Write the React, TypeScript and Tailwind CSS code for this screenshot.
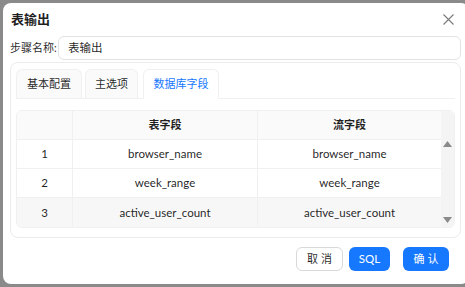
const rows = [
  { id: 1, src: "browser_name", dst: "browser_name" },
  { id: 2, src: "week_range", dst: "week_range" },
  { id: 3, src: "active_user_count", dst: "active_user_count" },
];

const font = "font-['Lato','Noto_Sans_CJK_SC',sans-serif]";

export default function App() {
  return (
    <div
      className={`w-[465px] h-[287px] overflow-hidden bg-[#8a8a8a] pl-[3px] pt-[3px] text-[rgba(0,0,0,0.88)] ${font}`}
    >
      <div className="w-[466px] h-[281px] bg-white rounded-[8px] pl-[7px] pr-[8px] flex flex-col">
        {/* header */}
        <div className="h-[33px] flex items-center justify-between">
          <div className="text-[13px] font-bold pl-[1px]">表输出</div>
          <svg width="11" height="11" viewBox="0 0 11 11" className="mr-[7px]">
            <path d="M0.5 0.5L10.5 10.5M10.5 0.5L0.5 10.5" stroke="#7a7a7a" strokeWidth="1.1" />
          </svg>
        </div>

        {/* step name */}
        <div className="h-[24px] flex items-center">
          <span className="text-[11px] w-[48px] whitespace-nowrap">步骤名称:</span>
          <div className="flex-1 h-[24px] border border-[#e3e3e3] rounded-[6px] flex items-center pl-[9px] text-[11.5px]">
            表输出
          </div>
        </div>

        {/* tabs card */}
        <div className="mt-[2px] h-[176px] border border-[#ececec] rounded-[8px] px-[5px] pt-[6px] flex flex-col">
          <div className="flex items-end border-b border-[#f0f0f0] h-[30px] text-[11px]">
            <div className="w-[66px] h-[29px] bg-[#fafafa] border border-[#f0f0f0] border-b-0 rounded-t-[6px] flex items-center justify-center">
              基本配置
            </div>
            <div className="ml-[3px] w-[53px] h-[29px] bg-[#fafafa] border border-[#f0f0f0] border-b-0 rounded-t-[6px] flex items-center justify-center">
              主选项
            </div>
            <div className="ml-[5px] w-[76px] h-[30px] -mb-px bg-white border border-[#f0f0f0] border-b-white rounded-t-[6px] flex items-center justify-center text-[#1677ff]">
              数据库字段
            </div>
          </div>

          {/* table */}
          <div className="mt-[11px] h-[118px] border border-[#f0f0f0] rounded-[6px] flex overflow-hidden">
            <div className="flex-1 flex flex-col text-[11.5px]">
              <div className="h-[29px] bg-[#fafafa] flex items-center font-bold border-b border-[#f0f0f0] text-[11px]">
                <div className="w-[56px] h-full border-r border-[#f0f0f0]" />
                <div className="w-[185px] text-center border-r border-[#f0f0f0] h-full flex items-center justify-center">表字段</div>
                <div className="flex-1 text-center">流字段</div>
              </div>
              {rows.map((r) => (
                <div
                  key={r.id}
                  className={`h-[29px] flex items-center border-b border-[#f0f0f0] last:border-b-0 ${r.id === 3 ? "bg-[#f7f7f7]" : ""}`}
                >
                  <div className="w-[56px] h-full flex items-center justify-center border-r border-[#f0f0f0]">{r.id}</div>
                  <div className="w-[185px] h-full flex items-center justify-center border-r border-[#f0f0f0]">{r.src}</div>
                  <div className="flex-1 h-full flex items-center justify-center">{r.dst}</div>
                </div>
              ))}
            </div>
            <div className="w-[13px] bg-[#f4f4f4] flex flex-col items-center justify-between pt-[30px] pb-[4px]">
              <svg width="9" height="6" viewBox="0 0 9 6">
                <path d="M4.5 0L9 6H0Z" fill="#8a8a8a" />
              </svg>
              <svg width="9" height="6" viewBox="0 0 9 6">
                <path d="M0 0H9L4.5 6Z" fill="#8a8a8a" />
              </svg>
            </div>
          </div>
        </div>

        {/* footer */}
        <div className="mt-[9px] flex justify-end pr-[12px] text-[11px]">
          <div className="w-[47px] h-[24px] border border-[#d9d9d9] rounded-[6px] flex items-center justify-center tracking-[3px] pl-[3px]">
            取消
          </div>
          <div className="ml-[6px] w-[41px] h-[24px] bg-[#1677ff] text-white rounded-[6px] flex items-center justify-center text-[11.5px]">
            SQL
          </div>
          <div className="ml-[13px] w-[46px] h-[24px] bg-[#1677ff] text-white rounded-[6px] flex items-center justify-center tracking-[3px] pl-[3px]">
            确认
          </div>
        </div>
      </div>
    </div>
  );
}
